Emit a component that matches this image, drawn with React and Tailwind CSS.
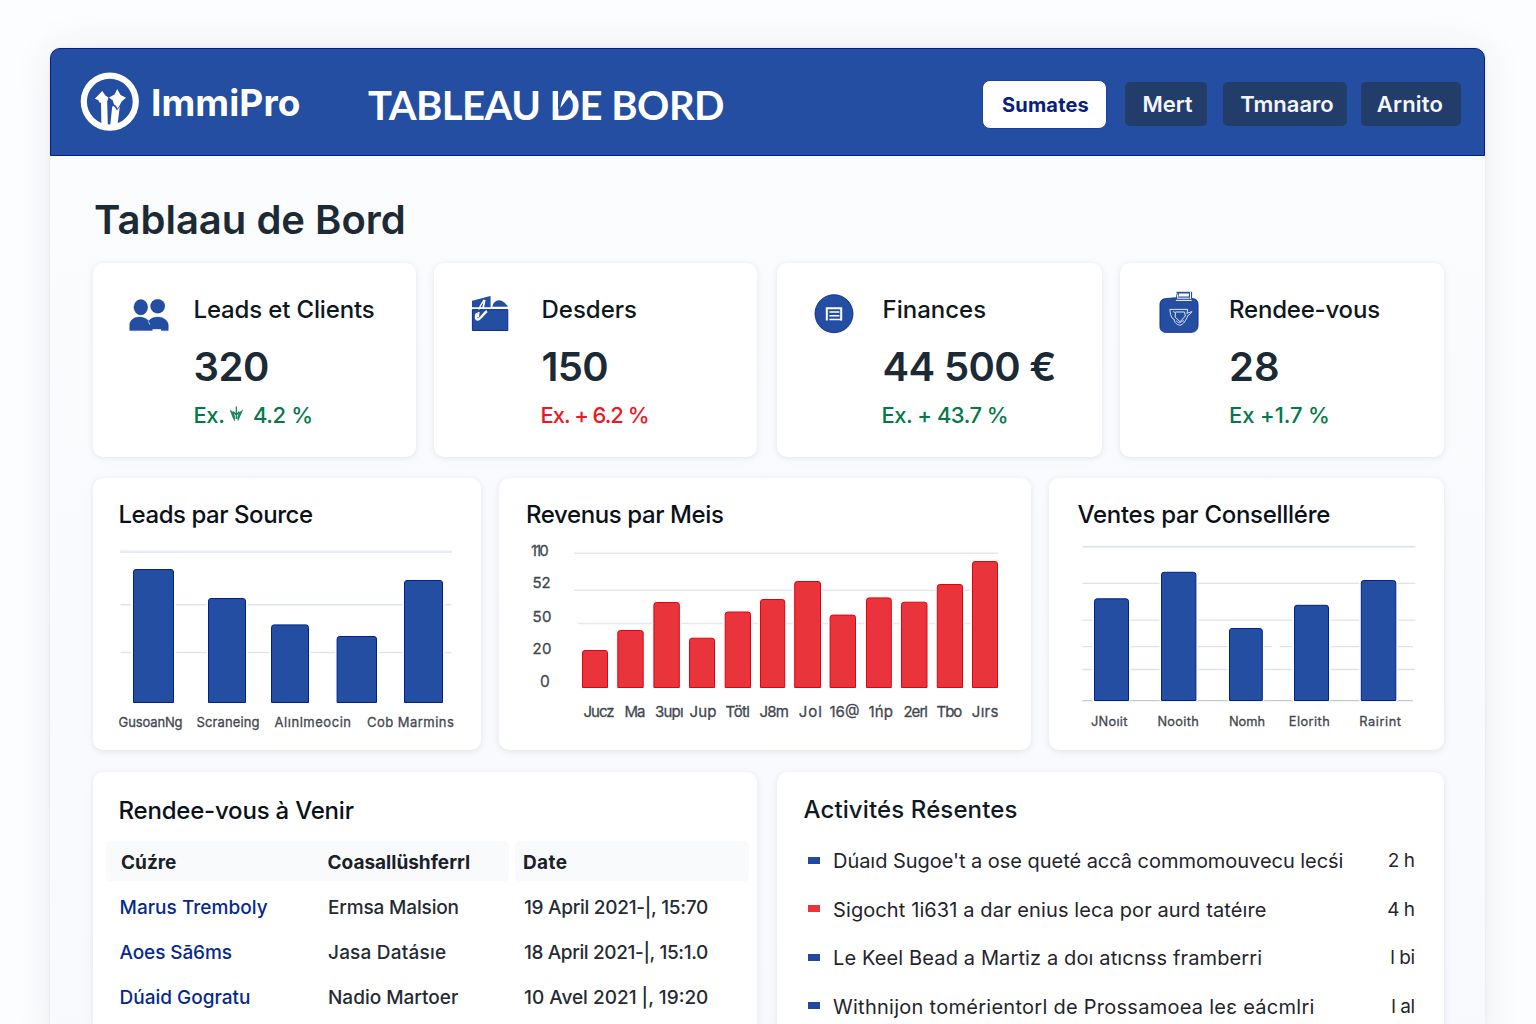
import React from "react";

const BLUE = "#234ea2";
const BLUE_EDGE = "#00218c";
const RED = "#e9343c";
const RED_EDGE = "#e4000f";

function Logo() {
  return (
    <svg width="60" height="60" viewBox="80 71.6 60 60" className="shrink-0">
      <circle cx="109.8" cy="101.2" r="26" fill="none" stroke="#fff" strokeWidth="6.2" />
      <path
        fill="#fff"
        d="M102.3 90.6 L105.4 95.2 L108.4 97.2 L107.6 100 L107.2 101 L107.8 124 L101.4 125 L101 102.6 L99 101.8 L98.6 99.8 L94.8 98.4 Z"
      />
      <path
        fill="#fff"
        d="M117.2 88.6 L120.6 94.6 L126 97.4 L121.6 101 L117.8 108.6 L116 105.4 L114 104 L112.8 100 L109 97.2 L114.6 94 Z"
      />
      <path fill="#fff" d="M112.2 106 L114.6 105.6 L117 109.4 L119.8 106.4 L117.6 123.6 L110.2 125 Z" />
      <path d="M114 105.2 L117 109.2 L119.6 106" fill="none" stroke={BLUE} strokeWidth="0.8" />
    </svg>
  );
}

function PeopleIcon() {
  return (
    <svg width="40" height="44" viewBox="129.5 291 40 44" fill={BLUE} stroke={BLUE_EDGE} strokeOpacity=".5" strokeWidth=".6">
      <path d="M130.2 330.6 V324.4 C130.2 320.6 134.6 317 139.6 317 C144 317 147.6 318.8 149.2 321 C151 318.6 154.2 317 158.6 317 C164 317 168.8 320.8 168.8 325.2 V330.6 Z" />
      <ellipse cx="141.3" cy="307.2" rx="6.9" ry="7.7" />
      <ellipse cx="158.2" cy="306.2" rx="7.1" ry="7" />
      <path d="M148.8 321.4 L150.4 324.6" stroke="#fff" strokeOpacity=".8" strokeWidth=".9" />
      <rect x="153" y="329.2" width="8.6" height="2" fill="#fff" stroke="none" />
    </svg>
  );
}

function FolderIcon() {
  return (
    <svg width="40" height="44" viewBox="470 291 40 44">
      <path d="M472 300.8 C479 299 485 297.4 490.6 296 V307.2 H472 Z" fill={BLUE} />
      <path d="M492.4 306.8 C492.8 303.2 495.4 300.2 499 300.2 C502.4 300.2 506 303.4 508 306.8 Z" fill={BLUE} />
      <path d="M472.4 309.6 H507.8 V330.5 H472.4 Z" fill={BLUE} stroke={BLUE_EDGE} strokeWidth=".9" />
      <path d="M484.2 300 C482.6 302.4 480.4 305 478.8 309.4" fill="none" stroke="#fff" strokeWidth="1.4" />
      <path d="M484.8 300 C483.6 304 484 306 482.6 309" fill="none" stroke="#fff" strokeWidth="1.8" />
      <path d="M487 311.2 C484 312.6 480.6 319.4 477.6 319.6 C475.6 319.4 475.4 316 477 313.4" fill="none" stroke="#fff" strokeWidth="2.4" />
      <path d="M478.6 312 L478 317.4" stroke="#fff" strokeWidth="2" />
    </svg>
  );
}

function FinanceIcon() {
  return (
    <svg width="40" height="44" viewBox="814 291 40 44" fill="none">
      <circle cx="834" cy="313.7" r="19" fill={BLUE} stroke={BLUE_EDGE} strokeWidth=".8" />
      <path d="M826.8 320.6 V308.2 H841.2 V320.6" stroke="#fff" strokeWidth="2" />
      <path d="M829.4 312 H839.4 M829.4 315.8 H839.4 M829.4 319.4 H841.6" stroke="#fff" strokeWidth="1.5" />
    </svg>
  );
}

function CaseIcon() {
  return (
    <svg width="40" height="44" viewBox="1158.5 291 40 44" fill="none">
      <path
        d="M1165 298.6 L1174 297.8 L1193 298.6 C1196.4 299.4 1197.6 301.4 1197.6 304.6 V325.6 C1197.6 330 1194.6 332.4 1190.6 332.4 H1165.4 C1161.4 332.4 1159.4 330 1159.4 326.6 V304.6 C1159.4 300.8 1161.6 298.8 1165 298.6 Z"
        fill={BLUE}
        stroke={BLUE_EDGE}
        strokeWidth=".7"
      />
      <path d="M1175.6 291.8 H1191.6 V299.6 H1175.6 Z" fill={BLUE} />
      <path d="M1178.6 293.4 H1188.4 V296.4 H1177.8 Z" fill="#fff" />
      <path d="M1175.4 300.4 H1191.2 M1176.6 298.2 H1189 M1190 292 V299 M1176 292.4 L1177.4 297.6" stroke="#fff" strokeWidth="1" />
      <path d="M1169.4 309.4 H1187.2 L1186.4 313.4 L1191.4 311.6 C1190.4 313.6 1188.8 314.8 1187.2 315.6 C1186 320 1182.4 325 1179.4 325.2 C1175.4 324.6 1173.4 321.2 1173.6 319.2 C1170.6 318.6 1169.8 314 1169.4 309.4 Z" stroke="#dfe6f5" strokeWidth="1" />
      <path d="M1172.6 311.6 L1175 312.6 L1174.6 317 L1179.6 321.8 L1184.8 316 L1184 312 H1175" stroke="#dfe6f5" strokeWidth="1" />
      <path d="M1175.4 320.6 L1178.6 323 L1183.6 320.4" stroke="#dfe6f5" strokeWidth=".8" />
    </svg>
  );
}

function TrendMark() {
  return (
    <svg width="15" height="17" viewBox="0 0 15 17" className="mx-[4px] inline-block align-[0px]" fill="#05784a">
      <path d="M0.6 3.6 L5 6.4 L6.2 12 L5.6 15.6 L3.6 11.4 Z M14.2 3.4 L9.6 6.8 L8.2 12 L9 15.4 L11.6 9.6 Z" opacity=".9" />
      <path d="M7.3 0.6 V13 M4.4 5.6 L7.3 9 L10.2 5.6" stroke="#05784a" strokeWidth="1.2" fill="none" />
    </svg>
  );
}

const card =
  "rounded-[10px] bg-white shadow-[0_1px_4px_rgba(60,75,120,0.08),0_2px_10px_rgba(60,75,120,0.05)]";

function Kpi({ icon, label, value, delta, box, col, labelCls, valueCls, deltaCls }) {
  return (
    <section className={`${card} ${box} flex h-[194px] pt-[28px]`}>
      {icon}
      <div className={`${col} whitespace-nowrap`}>
        <h3 className={`text-[24px] leading-[38px] font-medium text-[#0f1720] ${labelCls}`}>{label}</h3>
        <p className={`mt-[13px] text-[40px] leading-[50px] font-semibold text-[#1c2a36] ${valueCls}`}>{value}</p>
        <p className={`mt-[7px] text-[22px] leading-[32px] font-medium ${deltaCls}`}>{delta}</p>
      </div>
    </section>
  );
}

function Bars({ data, bottom, fill, edge }) {
  return data.map(([x1, x2, y]) => (
    <g key={x1}>
      <rect x={x1 - 1.5} y={y - 1} width={x2 - x1 + 3} height={bottom - y + 1} fill="#fff" />
      <path
        d={`M${x1 + 0.5} ${bottom - 0.5} V${y + 3} Q${x1 + 0.5} ${y + 0.5} ${x1 + 3} ${y + 0.5} H${x2 - 3} Q${x2 - 0.5} ${y + 0.5} ${x2 - 0.5} ${y + 3} V${bottom - 0.5} Z`}
        fill={fill}
        stroke={edge}
        strokeWidth="1"
      />
    </g>
  ));
}

function Labels({ data, y, size }) {
  return data.map(([t, x1, x2]) => (
    <text key={t} x={x1} y={y} fontSize={size} textLength={x2 - x1} fill="#43484f" stroke="#43484f" strokeWidth=".3">
      {t}
    </text>
  ));
}

function LeadsChart() {
  return (
    <svg width="388" height="210" viewBox="93 540 388 210" className="block">
      <path d="M120 551.7 H452" stroke="#e7ebf4" strokeWidth="2.4" />
      <path d="M120.5 604.7 H451.5 M120.5 652.5 H451.5" stroke="#dfe5ef" strokeWidth="1.5" />
      <Bars
        bottom={703}
        fill={BLUE}
        edge={BLUE_EDGE}
        data={[[133, 174, 569], [208, 246, 598], [271, 309, 624.4], [336.6, 377, 636], [404, 443, 580]]}
      />
      <Labels
        y={727}
        size={13}
        data={[["GusoanNg", 118.6, 182.6], ["Scraneing", 196.6, 259.6], ["Alınlmeocin", 274.6, 351], ["Cob Marmins", 367, 453.8]]}
      />
    </svg>
  );
}

function RevenueChart() {
  return (
    <svg width="532" height="210" viewBox="499 540 532 210" className="block">
      <path d="M574 553.2 H998 M574 590.2 H970 M578 623.6 H998" stroke="#e3e8f2" strokeWidth="1.5" />
      <Bars
        bottom={688}
        fill={RED}
        edge={RED_EDGE}
        data={[
          [582, 608, 650], [617.3, 643.7, 630], [653.4, 679.8, 602], [689, 715, 637.7],
          [724.7, 751, 611.5], [760, 785.2, 599], [794.2, 821, 581], [829.6, 856, 614.6],
          [866, 891.8, 597.4], [901, 927.5, 601.7], [936.8, 963, 584], [972, 998, 561],
        ]}
      />
      <Labels y={556} size={14.5} data={[["110", 531, 548.6]]} />
      <Labels y={587.6} size={15} data={[["52", 532.6, 550.6]]} />
      <Labels y={622.4} size={15} data={[["50", 532.6, 551.4]]} />
      <Labels y={654.4} size={15} data={[["20", 532.6, 551.4]]} />
      <Labels y={687.4} size={15.5} data={[["0", 540, 550.6]]} />
      <Labels
        y={716.8}
        size={15}
        data={[
          ["Jucz", 583.4, 614.6], ["Ma", 624.4, 645.4], ["3upı", 655, 683.6], ["Jup", 689.6, 716.4],
          ["Tötl", 725.6, 749.8], ["J8m", 759.4, 788.8], ["Jol", 798.8, 821.8], ["16@", 829.4, 859.4],
          ["1ńp", 868.6, 893], ["2erl", 903.4, 928], ["Tbo", 936.6, 962.2], ["Jırs", 971.8, 998.4],
        ]}
      />
    </svg>
  );
}

function SalesChart() {
  return (
    <svg width="395" height="210" viewBox="1049 540 395 210" className="block">
      <path d="M1082.4 546.7 H1415.4" stroke="#e0e6f0" strokeWidth="2" />
      <path
        d="M1082.4 583.4 H1415.4 M1082.4 620.1 H1415.4 M1082.4 646.6 H1272 M1280 646.6 H1413 M1082.4 669.5 H1415"
        stroke="#dde3ec"
        strokeWidth="1.3"
      />
      <path d="M1082.4 700.6 H1413" stroke="#c6cbd1" strokeWidth="1.4" />
      <Bars
        bottom={701}
        fill={BLUE}
        edge={BLUE_EDGE}
        data={[[1094, 1129, 598.3], [1161, 1196.4, 571.8], [1229, 1262.8, 628], [1294, 1329, 604.8], [1360.8, 1396.3, 580]]}
      />
      <Labels
        y={726.3}
        size={12.8}
        data={[["JNoıit", 1091, 1127.4], ["Nooith", 1157.4, 1198.8], ["Nomh", 1229, 1265], ["Elorith", 1288.8, 1329.8], ["Rairint", 1359.2, 1401]]}
      />
    </svg>
  );
}

function ChartCard({ title, width, pad, children }) {
  return (
    <section className={`${card} ${width} h-[272px]`}>
      <h2 className={`h-[62px] pt-[22px] text-[24px] leading-[30px] font-medium whitespace-nowrap text-[#0b1118] ${pad}`}>{title}</h2>
      {children}
    </section>
  );
}

const visits = [
  ["Marus Tremboly", "Ermsa Malsion", "19 April 2021-|, 15:70", "tracking-[0.04px]", "tracking-[-0.15px]", "tracking-[-0.28px]"],
  ["Aoes Sā6ms", "Jasa Datásıe", "18 April 2021-|, 15:1.0", "tracking-[-0.1px]", "tracking-[0.2px]", "tracking-[-0.38px]"],
  ["Dúaid Gogratu", "Nadio Martoer", "10 Avel 2021 |, 19:20", "tracking-[0px]", "tracking-[0px]", "tracking-[0px]"],
];

const activities = [
  ["Dúaıd Sugoe't a ose queté accâ commomouvecu lecśi", "2 h", "bg-[#1f49a3]", "tracking-[-0.04px]"],
  ["Sigocht 1i631 a dar enius leca por aurd tatéıre", "4 h", "bg-[#e9343c]", "tracking-[0.1px]"],
  ["Le Keel Bead a Martiz a doı atıcnss framberri", "l bi", "bg-[#1f49a3]", "tracking-[0.13px]"],
  ["Withnijon tomérientorl de Prossamoea leɛ eácmlri", "l al", "bg-[#1f49a3]", "tracking-[0.27px]"],
];

export default function App() {
  return (
    <div className="h-[1024px] overflow-hidden bg-[#fcfdfe] pt-[48px] pl-[50px] font-['Inter','Liberation_Sans',sans-serif]">
      <div className="h-[1000px] w-[1435px] rounded-t-[10px] bg-linear-to-b from-[#fbfcfe] to-[#f7f9fc] shadow-[0_0_40px_rgba(40,50,100,0.08),0_0_3px_rgba(40,50,100,0.10)]">
        <header className="flex h-[108px] items-center rounded-t-[10px] border border-[#061f86] bg-[#234ea2] pr-[23px] pl-[29px] whitespace-nowrap text-white">
          <Logo />
          <span className="mt-px ml-[11px] w-[217px] text-[37px] leading-[44px] font-bold tracking-[0.1px]">ImmiPro</span>
          <h1 className="mt-[5px] font-['Lato','Liberation_Sans',sans-serif] text-[40px] leading-[48px] font-bold tracking-[-0.5px]">
            TABLEAU{" "}
            <span className="relative">
              D
              <svg width="14" height="20" viewBox="0 0 14 20" className="absolute top-[9px] left-[8px]">
                <path d="M0 0 H13 L8 10 L1 19 H0 Z" fill={BLUE} />
                <path d="M8.4 0.6 H14 V4 L10 8 L2.4 18 C3.2 12 5.6 5.4 8.4 0.6 Z" fill="#fff" />
              </svg>
            </span>
            E BORD
          </h1>
          <nav className="ml-auto flex items-center pt-[4px] text-[22px] font-semibold text-[#f3f6fb]">
            <a className="mr-[18px] flex h-[49px] w-[125px] items-center justify-center rounded-[8px] border border-[#1a3f9c] bg-white pt-[1px] pl-[2px] text-[20px] font-bold tracking-[0.2px] text-[#06207f]">
              Sumates
            </a>
            <a className="mr-[16px] flex h-[44px] w-[82px] items-center justify-center rounded-[5px] bg-[#233d6b] pl-[3px]">Mert</a>
            <a className="mr-[14px] flex h-[44px] w-[124px] items-center justify-center rounded-[5px] bg-[#233d6b] pl-[4px]">Tmnaaro</a>
            <a className="flex h-[44px] w-[100px] items-center justify-center rounded-[5px] bg-[#233d6b] pr-[2px] tracking-[0.2px]">Arnito</a>
          </nav>
        </header>

        <main className="pt-[39px] pl-[43px]">
          <h2 className="pl-px text-[40px] leading-[50px] font-semibold text-[#1c2a36]">Tablaau de Bord</h2>

          <div className="mt-[18px] flex">
            <Kpi
              icon={<PeopleIcon />}
              label="Leads et Clients"
              value="320"
              delta={<>Ex.<TrendMark /> 4.2 %</>}
              box="w-[323px] pl-[36px]"
              col="ml-[24.5px]"
              labelCls="tracking-[-0.15px]"
              valueCls="tracking-[-0.4px]"
              deltaCls="text-[#05784a] tracking-[-0.4px]"
            />
            <Kpi
              icon={<FolderIcon />}
              label="Desders"
              value="150"
              delta="Ex. + 6.2 %"
              box="ml-[18px] w-[323px] pl-[36px]"
              col="ml-[31.5px]"
              labelCls=""
              valueCls="tracking-[-0.6px]"
              deltaCls="text-[#ee1620] tracking-[-1.05px] -ml-[1px]"
            />
            <Kpi
              icon={<FinanceIcon />}
              label="Finances"
              value="44 500 €"
              delta="Ex. + 43.7 %"
              box="ml-[20px] w-[325px] pl-[37px]"
              col="ml-[28.5px]"
              labelCls=""
              valueCls="tracking-[-0.65px]"
              deltaCls="text-[#05784a] tracking-[-0.5px] -ml-[1px]"
            />
            <Kpi
              icon={<CaseIcon />}
              label="Rendee-vous"
              value="28"
              delta="Ex +1.7 %"
              box="ml-[18px] w-[324px] pl-[38.5px]"
              col="ml-[30.5px]"
              labelCls="tracking-[-0.2px]"
              valueCls=""
              deltaCls="text-[#05784a] tracking-[-0.1px]"
            />
          </div>

          <div className="mt-[21px] flex gap-[18px]">
            <ChartCard title="Leads par Source" width="w-[388px]" pad="pl-[25.5px] tracking-[-0.45px]">
              <LeadsChart />
            </ChartCard>
            <ChartCard title="Revenus par Meis" width="w-[532px]" pad="pl-[27px] tracking-[-0.4px]">
              <RevenueChart />
            </ChartCard>
            <ChartCard title="Ventes par Conselllére" width="w-[395px]" pad="pl-[28.5px] tracking-[-0.28px]">
              <SalesChart />
            </ChartCard>
          </div>

          <div className="mt-[22px] flex gap-[20px]">
            <section className={`${card} h-[300px] w-[664px]`}>
              <h2 className="h-[69px] pt-[24px] pl-[25.5px] text-[24px] leading-[30px] font-medium tracking-[-0.2px] text-[#0b1118]">
                Rendee-vous à Venir
              </h2>
              <div className="ml-[13px] flex h-[40px] gap-[6px] text-[19px] leading-[43px] font-bold text-[#1a2129]">
                <div className="flex w-[403px] rounded-[4px] bg-[#f8fafc] pl-[15px]">
                  <span className="w-[206.5px]">Cúźre</span>
                  <span>Coasallüshferrl</span>
                </div>
                <div className="w-[234px] rounded-[4px] bg-[#f8fafc] pl-[8px] tracking-[0.4px]">Date</div>
              </div>
              <div className="mt-[4px] pl-[26.5px]">
                {visits.map(([a, b, c, ta, tb, tc]) => (
                  <div key={a} className="flex h-[45px] text-[19px] leading-[45px] font-medium whitespace-nowrap text-[#252b33]">
                    <span className={`w-[208.5px] text-[#06298f] ${ta}`}>{a}</span>
                    <span className={`w-[196px] ${tb}`}>{b}</span>
                    <span className={tc}>{c}</span>
                  </div>
                ))}
              </div>
            </section>

            <section className={`${card} h-[300px] w-[667px]`}>
              <h2 className="h-[65px] pt-[23px] pl-[26.5px] text-[24px] leading-[30px] font-medium tracking-[0.12px] text-[#101a24]">
                Activités Résentes
              </h2>
              <ul className="pr-[29.5px] pl-[31px]">
                {activities.map(([t, time, dot, tr]) => (
                  <li key={t} className="flex h-[48.5px] items-center text-[20px] leading-[48px] whitespace-nowrap text-[#1f252c]">
                    <i className={`mb-[2px] h-[7px] w-[12px] ${dot}`} />
                    <span className={`ml-[13px] ${tr}`}>{t}</span>
                    <span className="ml-auto text-[19px] tracking-[-0.5px]">{time}</span>
                  </li>
                ))}
              </ul>
            </section>
          </div>
        </main>
      </div>
    </div>
  );
}
